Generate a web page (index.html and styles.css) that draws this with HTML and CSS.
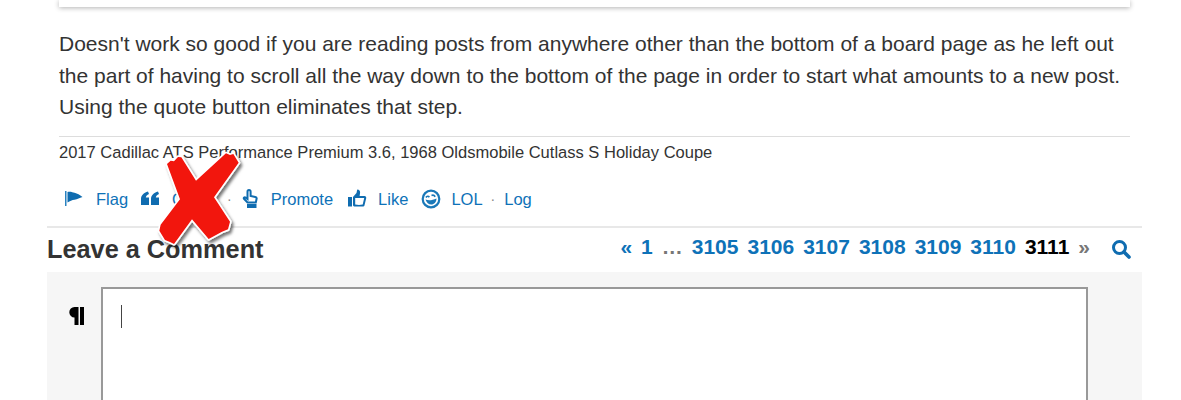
FILE: index.html
```html
<!DOCTYPE html>
<html>
<head>
<meta charset="utf-8">
<title>Leave a Comment</title>
<link rel="stylesheet" href="styles.css">
</head>
<body>
<div class="page">
  <div class="post">
    <div class="quote-card"></div>
    <p class="message">Doesn't work so good if you are reading posts from anywhere other than the bottom of a board page as he left out the part of having to scroll all the way down to the bottom of the page in order to start what amounts to a new post. Using the quote button eliminates that step.</p>
    <div class="signature">2017 Cadillac ATS Performance Premium 3.6, 1968 Oldsmobile Cutlass S Holiday Coupe</div>
    <div class="actions">
      <a class="action flag"><svg class="icon" width="20" height="20" viewBox="0 0 20 20"><path d="M1 2h1.500v15H1z" fill="#2a82c0"/><path d="M3.500 3c3-.8 5 .3 7 .8 3 .7 5 2.200 8 4.200-3 .8-5 2.500-8 2.800-2.500.3-4.500 1.200-7 2.700z" fill="#0f6cb0"/></svg><span>Flag</span></a>
      <a class="action quote"><svg class="icon" width="20" height="20" viewBox="0 0 20 20"><path d="M1 10c0-3.500 2.500-6 7-7.500l1 2.500C7 6 6 7 5.800 8.500H9V16H1zM11 10c0-3.500 2.500-6 7-7.500l1 2.500c-2 1-3 2-3.200 3.500H19V16h-8z" fill="#0f6cb0"/></svg><span>Quote</span></a>
      <span class="dot">·</span>
      <a class="action promote"><svg class="icon" width="20" height="20" viewBox="0 0 20 20"><path d="M8 1c1 0 1.600.7 1.600 1.700V7l4.700.9c1 .2 1.500.9 1.300 1.900l-.8 3.700H6.500L3 9.800c-.7-.9.500-2.200 1.600-1.300L6.500 10V2.700C6.500 1.700 7 1 8 1z" fill="#fff" stroke="#0f6cb0" stroke-width="2"/><path d="M6 15h9.500v4H6z" fill="#0f6cb0"/></svg><span>Promote</span></a>
      <a class="action like"><svg class="icon" width="20" height="20" viewBox="0 0 20 20"><path d="M1 8h4v9.500H1zM6 8l3.500-4c.3-1 .3-2 .8-3.500 2 0 3 1.400 2.800 3.200L12.600 7H17.500c1.300.1 2 1.100 1.700 2.300l-1.700 7c-.3 1-.9 1.300-1.700 1.300H8c-1 0-2-.6-2-1.600zM8.200 9v6.500c2.500.5 5 .5 7.500 0l1.500-6.500z" fill="#0f6cb0" fill-rule="evenodd"/></svg><span>Like</span></a>
      <a class="action lol"><svg class="icon" width="20" height="20" viewBox="0 0 20 20"><circle cx="10" cy="10" r="8.300" fill="#fff" stroke="#1a78b8" stroke-width="2.200"/><path d="M5 8.500c.8-1.600 2.500-1.600 3.300-.3M10.500 6.500c1.200-.6 2.800-.2 3.700 1.200" fill="none" stroke="#1a78b8" stroke-width="1.700"/><path d="M4.500 10.500c3 1.200 6.500 1 11-1 0 3.800-2.500 6-5.200 6-2.700 0-4.800-2-5.800-5z" fill="#1a78b8"/></svg><span>LOL</span></a>
      <span class="dot">·</span>
      <a class="action log"><span>Log</span></a>
    </div>
  </div>
  <div class="comment-bar">
    <h2 class="comment-title">Leave a Comment</h2>
    <nav class="pager">
      <a class="arrow">«</a><a>1</a><span class="gap">…</span><a>3105</a><a>3106</a><a>3107</a><a>3108</a><a>3109</a><a>3110</a><b>3111</b><span class="arrow muted">»</span>
      <svg class="search" width="20" height="20" viewBox="0 0 20 20"><circle cx="8.500" cy="8.500" r="6" fill="none" stroke="#0f6cb0" stroke-width="3"/><path d="M13 13l5 5" stroke="#0f6cb0" stroke-width="3.600" stroke-linecap="round"/></svg>
    </nav>
  </div>
  <div class="composer">
    <div class="tool"><svg width="16" height="18" viewBox="0 0 16 18"><path d="M6.500 0a5.200 5.200 0 0 0 0 10.400V18h4V0zM12 0h4v18h-4z" fill="#000"/></svg></div>
    <div class="editor"><span class="caret"></span></div>
  </div>
</div>
<svg class="cross" width="300" height="130" viewBox="0 0 900 390">
  <defs><filter id="shade" x="-20%" y="-20%" width="150%" height="150%"><feDropShadow dx="6" dy="8" stdDeviation="5" flood-color="#000" flood-opacity=".55"/></filter></defs>
  <path class="cross-mark" filter="url(#shade)" d="M351 72 L362 62 L372 64 L384 51 L394 52 L438 122 L528 40 L540 45 L550 42 L566 68 L559 78 L492 172 L540 245 L534 268 L516 275 L476 297 L426 238 L372 312 L360 306 L345 300 L328 272 L332 254 L390 178 Z"/>
</svg>
</body>
</html>
```
FILE: styles.css
```css
* { box-sizing: border-box; }
html, body { margin: 0; height: 400px; overflow: hidden; background: #fff; }
body { font-family: "Liberation Sans", Arial, sans-serif; color: #333; position: relative; }
.page { margin-left: 47px; width: 1095px; }
.post { padding: 0 12px; }
.quote-card { height: 7px; background: #fff; box-shadow: 0 1px 5px rgba(0,0,0,.3); }
.message { margin: 21px 0 0; font-size: 21px; line-height: 31.500px; color: #333; height: 93px; }
.signature { margin-top: 15px; border-top: 1px solid #ddd; padding-top: 7px; font-size: 16.530px; line-height: 17px; color: #333; height: 25px; }
.actions { display: flex; align-items: center; height: 65px; font-size: 16.500px; color: #0e72b8; padding-left: 5px; padding-top: 11px; }
.action { display: flex; align-items: center; }
.icon { flex: none; }
.flag span { margin-left: 12px; }
.flag { margin-right: 12px; }
.quote span { margin-left: 12px; }
.quote { margin-right: 10px; }
.dot { color: #888; font-size: 14px; }
.promote { margin-left: 9px; margin-right: 14px; }
.promote span { margin-left: 10px; }
.like { margin-right: 13px; }
.like span { margin-left: 11px; }
.lol span { margin-left: 10px; }
.lol + .dot { margin: 0 9px 0 8px; }
.comment-bar { border-top: 2px solid #e8e8e8; height: 46px; display: flex; justify-content: space-between; align-items: flex-start; }
.comment-title { margin: 7px 0 0; font-size: 25.300px; line-height: 28px; font-weight: 700; color: #333; }
.pager { display: flex; align-items: center; height: 38px; font-size: 21px; font-weight: 700; color: #0e72b8; gap: 9px; padding-right: 11px; }
.pager b { color: #000; }
.gap { color: #777; }
.muted { color: #777; }
.search { margin-left: 12px; margin-top: 4px; }
.composer { background: #f6f6f6; display: flex; height: 128px; padding: 15px 54px 0 0; }
.tool { width: 54px; padding-left: 21px; padding-top: 20px; line-height: 0; }
.editor { flex: 1; height: 200px; background: #fff; border: 2px solid #999; padding: 16px 18px; }
.caret { display: block; width: 1px; height: 23px; background: #444; }
.cross { position: absolute; left: 50px; top: 140px; }
.cross-mark { fill: #f2120c; stroke: #fff; stroke-width: 10px; stroke-linejoin: round; paint-order: stroke; }
```
